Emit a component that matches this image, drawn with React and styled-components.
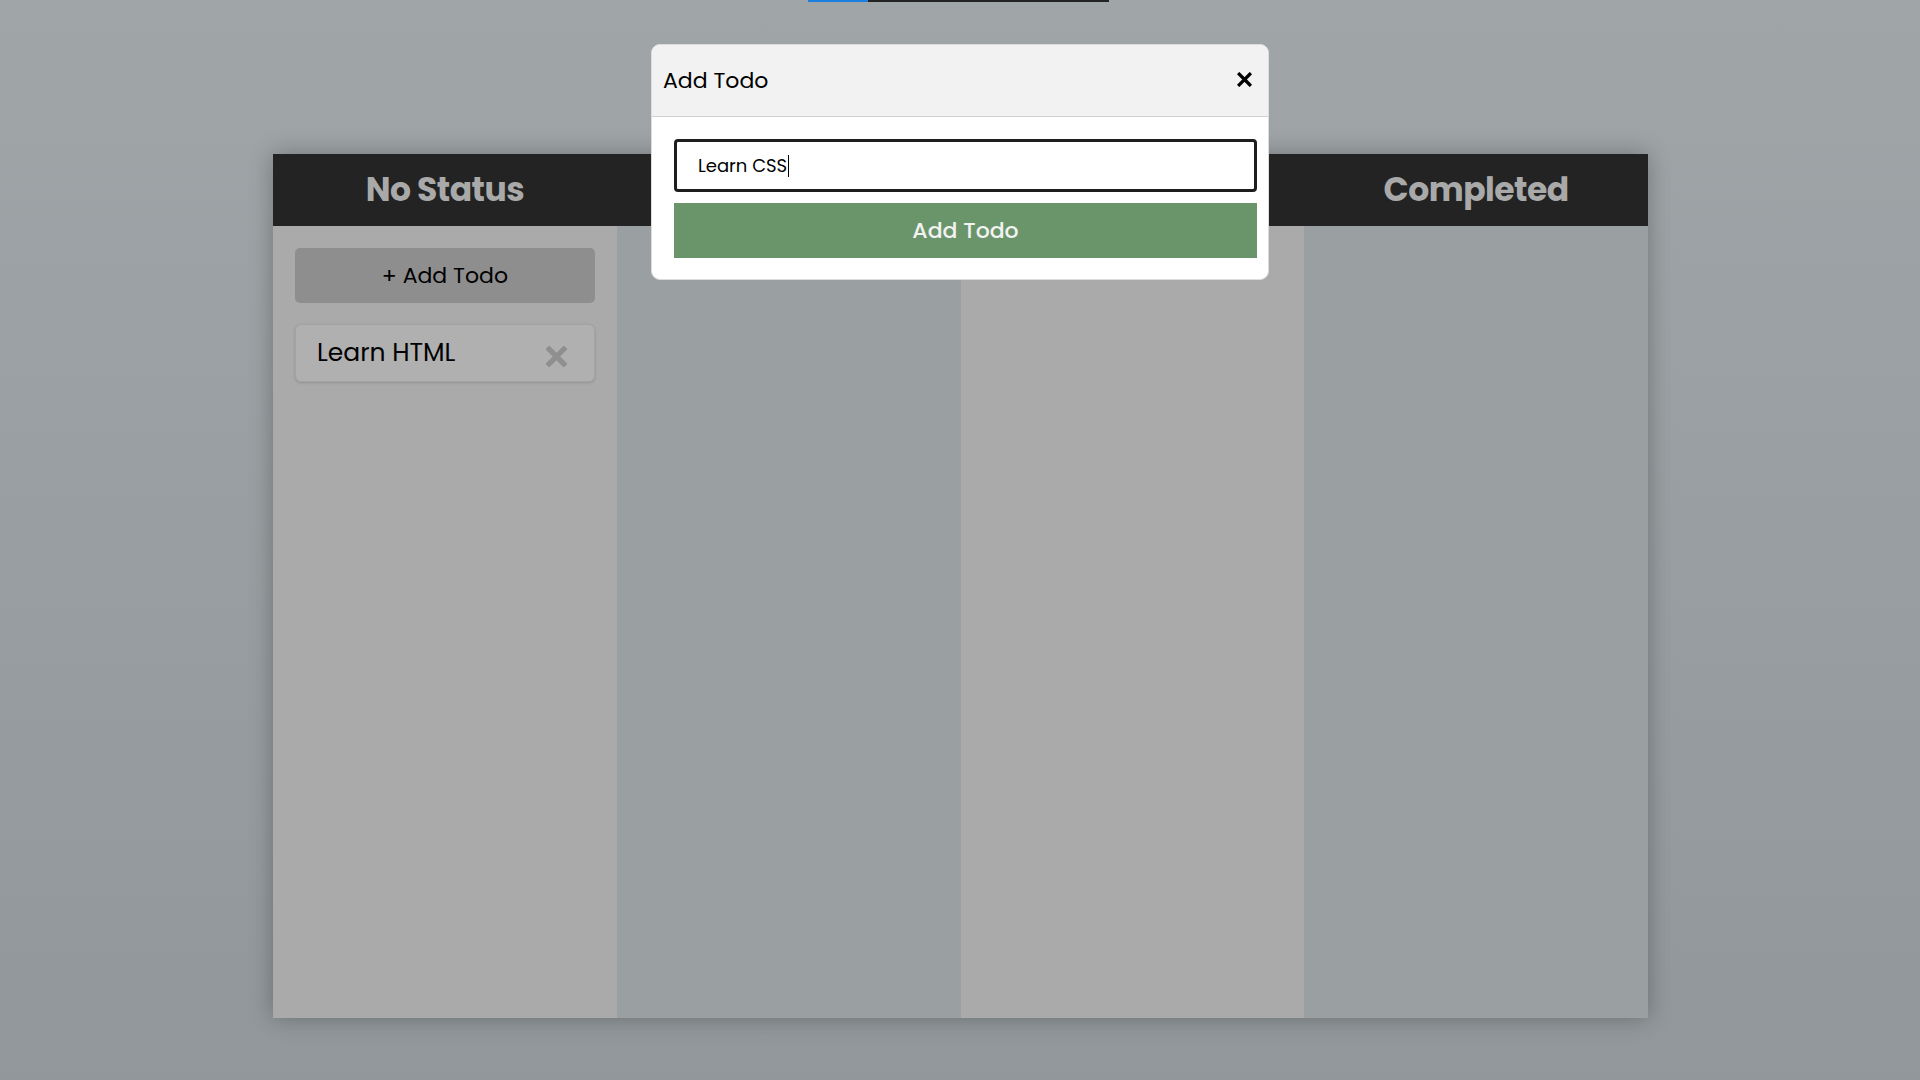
import React from "react";
import styled, { createGlobalStyle } from "styled-components";

const GlobalStyle = createGlobalStyle`
  html, body { margin: 0; padding: 0; }
  body {
    font-family: "Poppins", "Inter", "Noto Sans", sans-serif;
    background: linear-gradient(180deg, #a0a5a8 0%, #91979a 100%);
    min-height: 100vh;
    overflow: hidden;
  }
`;

const Page = styled.div`
  min-height: 1080px;
  display: flex;
  justify-content: center;
  padding-top: 154px;
  padding-left: 1px;
  box-sizing: border-box;
`;

const Board = styled.div`
  width: 1375px;
  height: 864px;
  display: grid;
  grid-template-columns: repeat(4, 1fr);
  box-shadow: 0 0 22px rgba(0, 0, 0, 0.28);
`;

const Column = styled.section`
  display: flex;
  flex-direction: column;
  background: ${(p) => (p.$alt ? "#9a9fa2" : "#aaaaaa")};
`;

const ColumnHeader = styled.h2`
  margin: 0;
  height: 72px;
  background: #232323;
  color: #a9a9a9;
  font-size: 33px;
  font-weight: 700;
  letter-spacing: -0.5px;
  display: flex;
  align-items: center;
  justify-content: center;
`;

const ColumnBody = styled.div`
  display: flex;
  flex-direction: column;
  gap: 21px;
  padding: 22px 22px;
`;

const AddButton = styled.button`
  height: 55px;
  border: none;
  border-radius: 5px;
  background: #8e8e8e;
  color: #000;
  font-family: inherit;
  font-size: 22px;
  font-weight: 400;
  cursor: pointer;
`;

const Card = styled.div`
  height: 58px;
  box-sizing: border-box;
  border: 1px solid #a3a3a3;
  border-radius: 6px;
  background: #b0b0b0;
  box-shadow: 0 1px 3px rgba(0, 0, 0, 0.15);
  display: flex;
  align-items: center;
  justify-content: space-between;
  padding: 0 27px 0 21px;
`;

const CardText = styled.span`
  font-size: 25px;
  color: #000;
`;

const IconButton = styled.button`
  border: none;
  background: none;
  padding: 0;
  display: flex;
  align-items: center;
  justify-content: center;
  cursor: pointer;
  color: ${(p) => p.$color || "#000"};
  margin-top: ${(p) => p.$mt || 0}px;
`;

const TopBar = styled.div`
  position: fixed;
  top: 0;
  left: 808px;
  width: 301px;
  height: 2px;
  display: flex;
`;

const BarPart = styled.div`
  height: 100%;
  width: ${(p) => p.$w}px;
  background: ${(p) => p.$c};
`;

const Overlay = styled.div`
  position: fixed;
  inset: 0;
  display: flex;
  justify-content: center;
  align-items: flex-start;
  padding-top: 44px;
`;

const Modal = styled.div`
  width: 618px;
  background: #fff;
  border-radius: 9px;
  border: 1px solid #dcdcdc;
  box-sizing: border-box;
  overflow: hidden;
`;

const ModalHeader = styled.div`
  height: 72px;
  box-sizing: border-box;
  background: #f2f2f2;
  border-bottom: 1px solid #cfcfcf;
  display: flex;
  align-items: center;
  justify-content: space-between;
  padding: 0 16px 0 11px;
`;

const ModalTitle = styled.h3`
  margin: 0;
  font-size: 22px;
  font-weight: 400;
  color: #000;
`;

const ModalBody = styled.div`
  display: flex;
  flex-direction: column;
  gap: 11px;
  padding: 22px 11px 21px 22px;
`;

const InputBox = styled.div`
  height: 53px;
  box-sizing: border-box;
  border: 3px solid #1e1e1e;
  border-radius: 4px;
  display: flex;
  align-items: center;
  padding-left: 21px;
  font-size: 18px;
  color: #000;
`;

const Caret = styled.span`
  display: inline-block;
  width: 1px;
  height: 22px;
  background: #000;
  margin-left: 1px;
`;

const SubmitButton = styled.button`
  height: 55px;
  border: none;
  background: #6a956b;
  color: #f2f2f2;
  font-family: inherit;
  font-size: 22px;
  font-weight: 500;
  cursor: pointer;
`;

const XIcon = ({ size, stroke }) => (
  <svg width={size} height={size} viewBox="0 0 20 20" fill="none">
    <path d="M3 3 L17 17 M17 3 L3 17" stroke="currentColor" strokeWidth={stroke} strokeLinecap="square" />
  </svg>
);

const columns = [
  { title: "No Status", alt: false, add: true, items: ["Learn HTML"] },
  { title: "In Progress", alt: true, items: [] },
  { title: "In Review", alt: false, items: [] },
  { title: "Completed", alt: true, items: [] },
];

export default function App() {
  return (
    <>
      <GlobalStyle />
      <TopBar>
        <BarPart $w={60} $c="#1c7fe0" />
        <BarPart $w={241} $c="#232323" />
      </TopBar>
      <Page>
        <Board>
          {columns.map((col) => (
            <Column key={col.title} $alt={col.alt}>
              <ColumnHeader>{col.title}</ColumnHeader>
              <ColumnBody>
                {col.add && <AddButton>+ Add Todo</AddButton>}
                {col.items.map((item) => (
                  <Card key={item}>
                    <CardText>{item}</CardText>
                    <IconButton $color="#8f8f8f" $mt={6} aria-label="Delete">
                      <XIcon size={21} stroke={5} />
                    </IconButton>
                  </Card>
                ))}
              </ColumnBody>
            </Column>
          ))}
        </Board>
      </Page>
      <Overlay>
        <Modal>
          <ModalHeader>
            <ModalTitle>Add Todo</ModalTitle>
            <IconButton aria-label="Close" $mt={-2}>
              <XIcon size={15} stroke={4.4} />
            </IconButton>
          </ModalHeader>
          <ModalBody>
            <InputBox>
              Learn CSS
              <Caret />
            </InputBox>
            <SubmitButton>Add Todo</SubmitButton>
          </ModalBody>
        </Modal>
      </Overlay>
    </>
  );
}
